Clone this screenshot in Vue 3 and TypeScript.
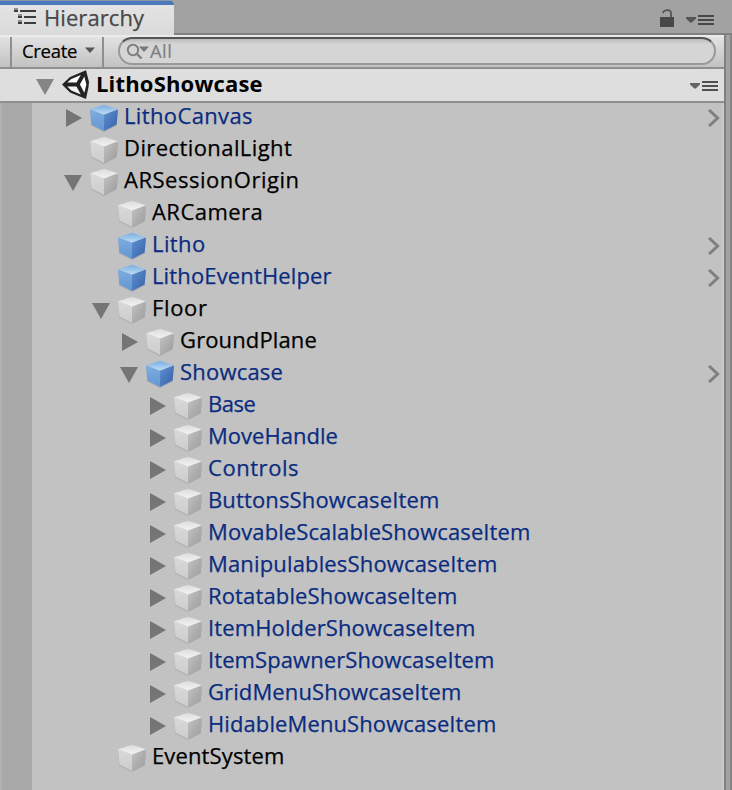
<script setup lang="ts">
interface TreeNode {
  name: string
  depth: number
  end: number
  arrow?: 'open' | 'closed'
  blue?: boolean
  prefab?: boolean
}

const nodes: TreeNode[] = [
  { name: 'LithoCanvas', depth: 0, end: 252, arrow: 'closed', blue: true, prefab: true },
  { name: 'DirectionalLight', depth: 0, end: 292 },
  { name: 'ARSessionOrigin', depth: 0, end: 297.5, arrow: 'open' },
  { name: 'ARCamera', depth: 1, end: 261.5 },
  { name: 'Litho', depth: 1, end: 205, blue: true, prefab: true },
  { name: 'LithoEventHelper', depth: 1, end: 331.5, blue: true, prefab: true },
  { name: 'Floor', depth: 1, end: 207, arrow: 'open' },
  { name: 'GroundPlane', depth: 2, end: 316.5, arrow: 'closed' },
  { name: 'Showcase', depth: 2, end: 282.5, arrow: 'open', blue: true, prefab: true },
  { name: 'Base', depth: 3, end: 255.5, arrow: 'closed', blue: true },
  { name: 'MoveHandle', depth: 3, end: 337.5, arrow: 'closed', blue: true },
  { name: 'Controls', depth: 3, end: 298, arrow: 'closed', blue: true },
  { name: 'ButtonsShowcaseItem', depth: 3, end: 438, arrow: 'closed', blue: true },
  { name: 'MovableScalableShowcaseItem', depth: 3, end: 529, arrow: 'closed', blue: true },
  { name: 'ManipulablesShowcaseItem', depth: 3, end: 496, arrow: 'closed', blue: true },
  { name: 'RotatableShowcaseItem', depth: 3, end: 456, arrow: 'closed', blue: true },
  { name: 'ItemHolderShowcaseItem', depth: 3, end: 474, arrow: 'closed', blue: true },
  { name: 'ItemSpawnerShowcaseItem', depth: 3, end: 493, arrow: 'closed', blue: true },
  { name: 'GridMenuShowcaseItem', depth: 3, end: 460, arrow: 'closed', blue: true },
  { name: 'HidableMenuShowcaseItem', depth: 3, end: 495, arrow: 'closed', blue: true },
  { name: 'EventSystem', depth: 1, end: 283, },
]

const INDENT = 28
const LABEL_X = 124
const ctx = document.createElement('canvas').getContext('2d')!

// Letter spacing that makes a label occupy the given width.
function track(text: string, width: number, font: string): string {
  ctx.font = font
  const m = ctx.measureText(text)
  return ((width - m.actualBoundingBoxRight) / (text.length - 1)).toFixed(3) + 'px'
}

function labelTrack(n: TreeNode): string {
  return track(n.name, n.end - LABEL_X - n.depth * INDENT, '22px "Open Sans"')
}
</script>

<template>
  <div class="window">
    <svg class="defs" width="0" height="0" aria-hidden="true">
      <defs>
        <linearGradient id="gTop" x1="0" y1="0" x2="0" y2="1"><stop offset="0" stop-color="#dcdcdc" /><stop offset="1" stop-color="#f4f4f4" /></linearGradient>
        <linearGradient id="gLeft" x1="0" y1="0" x2="0" y2="1"><stop offset="0" stop-color="#d9d9d9" /><stop offset="1" stop-color="#cdcdcd" /></linearGradient>
        <linearGradient id="gRight" x1="0" y1="0" x2="1" y2="1"><stop offset="0" stop-color="#c2c2c2" /><stop offset="1" stop-color="#9b9b9b" /></linearGradient>
        <linearGradient id="bTop" x1="0" y1="0" x2="0" y2="1"><stop offset="0" stop-color="#78aee2" /><stop offset="1" stop-color="#c0ddf5" /></linearGradient>
        <linearGradient id="bLeft" x1="0" y1="0" x2="0" y2="1"><stop offset="0" stop-color="#7caee0" /><stop offset="1" stop-color="#6496d2" /></linearGradient>
        <linearGradient id="bRight" x1="0" y1="0" x2="1" y2="1"><stop offset="0" stop-color="#5f92d0" /><stop offset="1" stop-color="#345fa8" /></linearGradient>
      </defs>
    </svg>

    <header class="tabs">
      <div class="tab">
        <svg class="tab-icon" width="24" height="18" viewBox="0 0 24 18">
          <g fill="#3c3c3c">
            <rect x="0" y="-1" width="4" height="2" opacity=".5" /><rect x="0" y="1" width="4" height="2" /><rect x="6" y="1" width="16" height="2" />
            <rect x="4" y="5" width="4" height="2" opacity=".5" /><rect x="4" y="7" width="4" height="2" /><rect x="10" y="7" width="12" height="2" />
            <rect x="4" y="11" width="4" height="2" opacity=".5" /><rect x="4" y="13" width="4" height="2" /><rect x="10" y="13" width="12" height="2" />
          </g>
        </svg>
        <span class="tab-title" :style="{ letterSpacing: track('Hierarchy', 101, '22px &quot;Open Sans&quot;') }">Hierarchy</span>
      </div>
      <div class="tab-tools">
        <svg width="14" height="18" viewBox="0 0 14 18">
          <path d="M0 8H14V18H0Z" fill="#484848" />
          <path d="M3 4Q3.5 1.2 7.5 1.2Q11 1.2 11 4.5V8" fill="none" stroke="#555" stroke-width="1.8" />
        </svg>
        <svg class="menu-icon" width="28" height="10" viewBox="0 0 28 10">
          <path d="M0 2H10V3.4L5.8 7.6H4.2L0 3.4Z" fill="#484848" opacity=".85" /><path d="M12 1H28M12 5H28M12 9H28" stroke="#484848" stroke-width="2" />
        </svg>
      </div>
    </header>

    <div class="body">
      <main class="panel">
        <div class="toolbar">
          <div class="stub"></div>
          <button class="create" type="button">
            <span :style="{ letterSpacing: track('Create', 55, '18.5px &quot;Open Sans&quot;') }">Create</span>
            <svg width="10" height="6" viewBox="0 0 10 6"><path d="M0 .5H10L5 6Z" fill="#555" /></svg>
          </button>
          <div class="search">
            <svg width="24" height="17" viewBox="0 0 24 17">
              <circle cx="7" cy="7" r="5.2" fill="none" stroke="#808080" stroke-width="2" />
              <path d="M11 11L15.5 15.5" stroke="#808080" stroke-width="2.4" />
              <path d="M13 3.5H23L18 9Z" fill="#777" />
            </svg>
            <span>All</span>
          </div>
        </div>

        <div class="scene">
          <svg class="scene-arrow" width="18" height="16" viewBox="0 0 18 16"><path d="M0 0H18L9 16Z" fill="#858585" /></svg>
          <svg class="logo" width="28" height="29" viewBox="0 0 28 29">
            <path d="M0 14.6L8 7L24 .2L27 12L26.5 17L24 29L8 22.5Z" fill="#222" />
            <path d="M5.2 12.6L9.3 8.9L18.8 4.9L14.5 12.6Z" fill="#fff" />
            <path d="M5.2 16.4L9.3 20.6L18.8 24.6L14.5 16.4Z" fill="#f4f4f4" />
            <path d="M22.3 6.4L24.4 14.5L22.3 22.8L17.9 14.6Z" fill="#fff" />
          </svg>
          <span class="scene-name" :style="{ letterSpacing: track('LithoShowcase', 166.5, 'bold 22px &quot;Open Sans&quot;') }">LithoShowcase</span>
          <svg class="scene-menu" width="28" height="10" viewBox="0 0 28 10">
            <path d="M0 2H10V3.4L5.8 7.6H4.2L0 3.4Z" fill="#505050" opacity=".85" /><path d="M12 1H28M12 5H28M12 9H28" stroke="#505050" stroke-width="2" />
          </svg>
        </div>

        <div class="tree">
          <div class="gutter"></div>
          <ul class="rows">
            <li v-for="n in nodes" :key="n.name" class="row" :style="{ paddingLeft: 32 + n.depth * INDENT + 'px' }">
              <span class="arrow">
                <svg v-if="n.arrow === 'open'" width="18" height="16" viewBox="0 0 18 16"><path d="M0 0H18L9 16Z" fill="#757575" /></svg>
                <svg v-else-if="n.arrow === 'closed'" class="closed" width="16" height="18" viewBox="0 0 16 18"><path d="M0 0V18L16 9Z" fill="#757575" /></svg>
              </span>
              <svg class="cube" width="28" height="28" viewBox="0 0 28 28">
                <path d="M0 6L14 12L28 6L26.8 21.5L14 28L1.2 21.5Z" fill="#000" opacity=".12" />
                <path d="M0 5.2L14 10.4V27L1.4 20.4Z" :fill="n.prefab ? 'url(#bLeft)' : 'url(#gLeft)'" />
                <path d="M28 5.2L14 10.4V27L26.6 20.4Z" :fill="n.prefab ? 'url(#bRight)' : 'url(#gRight)'" />
                <path d="M14 .8L28 5.2L14 10.6L0 5.2Z" :fill="n.prefab ? 'url(#bTop)' : 'url(#gTop)'" />
              </svg>
              <span class="label" :class="{ blue: n.blue }" :style="{ letterSpacing: labelTrack(n) }">{{ n.name }}</span>
              <svg v-if="n.prefab" class="chevron" width="12" height="18" viewBox="0 0 12 18">
                <path d="M1 1L9.6 9L1 17" fill="none" stroke="#808080" stroke-width="3" />
              </svg>
            </li>
          </ul>
        </div>
      </main>
      <div class="edge"></div>
    </div>
  </div>
</template>

<style>
body { margin: 0; overflow: hidden; }
</style>

<style scoped>
.window { width: 732px; height: 790px; display: flex; flex-direction: column; background: #a2a2a2; font-family: "Open Sans", "Noto Sans", sans-serif; font-size: 22px; overflow: hidden; color: #000; }
.window svg { display: block; flex: none; }
.window .defs { position: absolute; }
.window span { white-space: nowrap; font-kerning: auto; }
.tabs { height: 35px; flex: none; display: flex; justify-content: space-between; background: linear-gradient(#a2a2a2 33px, #808080 33px); box-sizing: border-box; }
.tab { box-sizing: border-box; width: 174px; height: 35px; padding: 4px 0 0 14px; border-radius: 0 5px 0 0; background: linear-gradient(#8694a8 1px, #4a7abb 1px, #4a7abb 5px, #e3e3e3 5px, #dadada); display: flex; }
.tab-icon { margin-top: 5px; overflow: visible; }
.tab-title { color: #484848; margin: -2px 0 0 6px; line-height: 30px; height: 30px; -webkit-text-stroke: .25px; }
.tab-tools { display: flex; padding: 9px 18px 0 0; gap: 12px; }
.menu-icon { margin-top: 6px; }
.body { flex: 1; min-height: 0; display: flex; }
.panel { flex: 1; display: flex; flex-direction: column; min-width: 0; }
.edge { width: 8px; box-sizing: border-box; border-left: 2px solid #808080; border-right: 2px solid #858585; background: #a2a2a2; }
.toolbar { height: 34px; flex: none; box-sizing: border-box; border-top: 2px solid #eaeaea; border-bottom: 2px solid #8f8f8f; background: linear-gradient(#e2e2e2, #c2c2c2); display: flex; }
.stub { width: 10px; }
.create { width: 94px; box-sizing: border-box; border: solid #8f8f8f; border-width: 0 2px; background: none; padding: 0 7px 0 10px; display: flex; justify-content: space-between; font: 18.5px/28px "Open Sans", sans-serif; color: #000; -webkit-text-stroke: .2px; }
.create svg { margin-top: 10px; }
.search { margin-left: 14px; width: 598px; height: 28px; box-sizing: border-box; border: 2px solid #999; border-top-color: #555; border-radius: 14px; background: linear-gradient(#bcbcbc, #d5d5d5 5px); display: flex; padding: 4px 0 0 6px; }
.search span { font-size: 18.5px; line-height: 22px; height: 22px; margin-top: -3px; letter-spacing: .4px; color: #808080; -webkit-text-stroke: .2px; }
.scene { height: 34px; flex: none; box-sizing: border-box; border-bottom: 2px solid #8f8f8f; background: #dedede; display: flex; padding-left: 36px; }
.scene-arrow { margin-top: 10px; }
.logo { margin: 1px 0 0 8px; }
.scene-name { font-weight: bold; line-height: 30px; height: 30px; margin: -1px 0 0 6px; }
.scene-menu { margin: 12px 6px 0 auto; }
.tree { flex: 1; display: flex; background: #c2c2c2; box-sizing: border-box; border-right: 2px solid #cbcbcb; min-height: 0; }
.gutter { width: 32px; flex: none; box-sizing: border-box; background: #a9a9a9; border-left: 2px solid #b2b2b2; }
.rows { flex: 1; list-style: none; margin: -1px 0 0; padding: 0; }
.row { display: flex; height: 32px; box-sizing: border-box; }
.arrow { width: 26px; flex: none; padding-top: 9px; }
.arrow .closed { margin: -2px 0 0 2px; }
.cube { margin-top: 2px; }
.label { line-height: 32px; margin: -3px 0 0 6px; -webkit-text-stroke: .25px; }
.label.blue { color: #0a2c80; }
.chevron { margin: 7px 2px 0 auto; }
</style>
